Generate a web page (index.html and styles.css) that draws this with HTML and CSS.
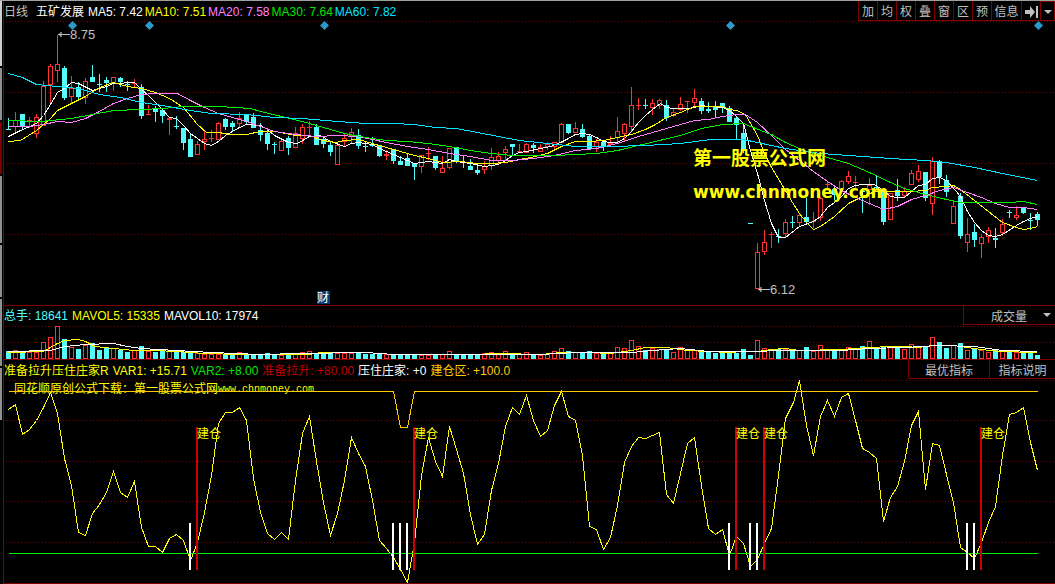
FILE: index.html
```html
<!DOCTYPE html>
<html lang="zh-CN">
<head>
<meta charset="utf-8">
<title>五矿发展 日线</title>
<link rel="stylesheet" href="styles.css">
</head>
<body>
<div class="app">
  <div class="rail"><i class="rail-light"></i><i class="rail-short"></i><i class="rail-red"></i><i></i><i class="rail-short"></i><i></i><i class="rail-short"></i></div>
  <main class="panels">
    <section class="panel">
      <header class="bar">
        <div class="legend low tight">
          <span class="silver period">日线</span><span class="white name">五矿发展</span>
          <span class="white">MA5: 7.42</span><span class="yellow">MA10: 7.51</span><span class="pink">MA20: 7.58</span><span class="green">MA30: 7.64</span><span class="aqua">MA60: 7.82</span>
        </div>
        <nav class="tools">
          <button>加</button><button>均</button><button>权</button><button>叠</button><button>窗</button><button>区</button><button>预</button><button class="wide">信息</button><button aria-label="移到最后"><svg width="13" height="12" viewBox="0 0 13 12"><path d="M0 4h5V0l5 6-5 6V8H0zM11 0h2v12h-2z" fill="#c0c0c0"/></svg></button><button class="more" aria-label="更多"><i class="caret"></i></button>
        </nav>
      </header>
      <svg class="chart" viewBox="4 21 1051 284">
        <g class="grid"><path d="M6 21.5H1055M6 92.5H1055M6 163.5H1055M6 234.5H1055"/></g>
        <g id="candles" class="crisp"></g>
        <g class="lines">
          <polyline class="l-white" points="8,136 20,130 36,123 43,115 50,104 57,92 64,88 71,82 78,83 92,90 106,86 113,83 134,82 141,89 150,97 160,107 169,117 176,118 183,125 190,133 197,138 204,143 211,145 218,141 225,135 239,127 246,124 260,125 267,129 274,135 288,142 297,143 309,136 320,135 330,141 344,146 351,143 358,142 372,144 379,148 393,154 407,160 414,163 428,161 442,163 449,159 456,161 470,163 484,166 498,164 505,160 512,155 519,152 526,151 540,148 550,146 560,142 568,138 575,134 582,133 589,134 596,137 603,141 610,142 617,142 624,138 631,131 638,122 645,115 652,109 660,103 666,107 673,108 690,108 701,105 708,106 722,107 729,110 736,116 743,123 750,150 757,173 764,200 771,223 778,237 785,237 799,226 813,221 820,216 827,207 834,202 841,196 848,188 855,185 862,184 874,184 883,190 890,196 897,197 904,197 911,191 918,185 925,184 932,178 939,177 946,180 955,190 960,196 967,211 974,222 981,230 988,235 995,236 1002,234 1016,225 1023,221 1030,218 1037,216"/>
          <polyline class="l-yellow" points="8,141 20,140 36,130 50,118 57,110 71,103 85,96 99,87 113,82 127,86 141,88 155,92 169,98 183,107 197,124 206,132 218,132 230,134 246,134 260,131 275,131 295,135 309,135 323,140 335,142 344,140 358,139 372,143 386,147 400,151 414,155 428,158 442,162 460,161 477,163 491,163 505,162 519,159 530,157 547,153 561,146 575,141 589,141 603,140 617,137 631,134 645,129 655,124 666,117 680,112 694,106 722,106 729,109 736,110 745,114 757,135 764,153 771,167 785,190 792,202 799,213 806,222 813,229 820,226 834,216 848,203 862,196 875,191 911,191 925,190 932,187 946,186 953,185 960,189 974,200 988,211 1002,222 1016,227 1023,229 1030,228 1037,226"/>
          <polyline class="l-pink" points="8,126 29,126 43,124 57,121 71,122 85,118 99,111 113,103 127,98 141,94 155,93 177,93 190,100 204,107 218,113 232,117 246,121 260,126 274,131 295,134 316,136 337,135 358,136 372,139 386,142 407,146 428,149 449,153 470,156 491,160 512,160 533,158 554,155 575,150 596,148 617,143 638,136 659,130 680,124 694,120 708,119 722,116 736,114 745,114 757,122 771,135 785,149 799,160 813,171 827,181 841,190 855,197 869,203 883,209 897,206 911,199 925,195 939,190 953,187 967,192 981,197 995,203 1009,207 1023,207 1037,209"/>
          <polyline class="l-green" points="8,120 40,121 71,118 92,114 113,110 141,109 162,108 183,106 218,106 250,108 260,111 281,116 302,121 323,127 344,133 365,137 386,140 407,141 428,143 449,146 470,150 491,153 512,155 554,155 575,154 596,153 617,150 638,145 659,140 680,135 701,128 722,124 743,123 750,126 771,134 785,142 806,151 827,157 848,163 869,172 890,182 904,188 925,194 946,199 960,202 1009,202 1023,201 1037,204"/>
          <polyline class="l-aqua" points="8,73 22,77 36,84 57,86 78,88 99,94 120,97 141,102 162,105 190,110 211,113 246,114 274,117 302,118 337,121 365,123 393,123 414,124 435,127 456,128 477,132 498,136 519,140 547,143 575,146 610,146 645,145 680,143 710,139 743,139 757,142 785,148 820,153 848,155 890,158 925,160 946,162 974,167 1002,173 1037,180"/>
        </g>
        <path class="marks" d="M72.500 21l4.500 4.500-4.500 4.500-4.500-4.500zM149.500 21l4.500 4.500-4.500 4.500-4.500-4.500zM324.500 21l4.500 4.500-4.500 4.500-4.500-4.500zM730.500 21l4.500 4.500-4.500 4.500-4.500-4.500zM1038.500 21l4.500 4.500-4.500 4.500-4.500-4.500z"/>
        <path class="arrow" d="M58 34.500h12M61 32v5M59 34.500l2-2M59 34.500l2 2M758 289.500h12M761 287v5M759 289.500l2-2M759 289.500l2 2"/>
        <text class="price" x="70" y="39">8.75</text>
        <text class="price" x="770" y="294">6.12</text>
        <rect class="badge" x="317" y="291" width="13" height="13"/>
        <text class="badge-text" x="317" y="302">财</text>
        <text class="brand" x="693" y="165">第一股票公式网</text>
        <text class="site" x="693" y="198">www.chnmoney.com</text>
      </svg>
    </section>

    <section class="panel">
      <header class="bar">
        <div class="legend">
          <span class="cyan">总手: 18641</span><span class="yellow">MAVOL5: 15335</span><span class="white">MAVOL10: 17974</span>
        </div>
        <div class="picker"><select aria-label="副图指标"><option>成交量</option></select><i class="caret"></i></div>
      </header>
      <svg class="chart" viewBox="4 326 1051 33">
        <g class="grid"><path d="M6 326.500H1055M6 342.500H1055"/></g>
        <g id="volumes" class="crisp"></g>
        <g class="lines">
          <polyline class="l-yellow" points="8,352 43,351 57,343 64,340 78,339 85,341 95,346 113,348 134,350 155,350 176,351 204,353 240,354 309,354 320,352 365,352 393,354 470,354 500,353 540,354 561,352 589,352 610,353 631,350 645,347 666,347 687,350 708,351 729,352 743,351 757,351 771,349 785,348 799,350 841,349 869,347 890,346 904,346 918,347 932,345 953,345 967,347 981,349 1000,351 1037,352"/>
          <polyline class="l-white" points="8,351 50,350 64,346 85,344 113,343 127,346 141,348 176,350 211,352 260,354 300,353 365,352 393,354 540,354 575,352 631,352 652,350 680,348 708,351 750,351 785,350 841,350 869,348 904,347 939,345 974,346 1002,350 1037,351"/>
        </g>
      </svg>
    </section>

    <section class="panel">
      <header class="bar">
        <div class="legend low">
          <span class="yellow">准备拉升压住庄家R</span><span class="yellow">VAR1: +15.71</span><span class="green">VAR2: +8.00</span><span class="red">准备拉升: +80.00</span><span class="white">压住庄家: +0</span><span class="gold">建仓区: +100.0</span>
        </div>
        <div class="actions"><button>最优指标</button><button>指标说明</button></div>
      </header>
      <svg class="chart" viewBox="4 380 1051 203">
        <g class="grid"><path d="M6 380.500H1055M6 420.500H1055M6 461.500H1055M6 501.500H1055M6 542.500H1055"/></g>
        <g class="note">
          <text x="14" y="393">同花顺原创公式下载：第一股票公式网</text>
          <text class="mono" x="218" y="392">www.chnmoney.com</text>
        </g>
        <g class="lines">
          <polyline class="l-yellow" points="8,409 15,404 22,434 29,429 36,420 43,407 50,392 57,413 64,458 71,485 78,532 85,535 92,513 99,504 106,492 113,471 120,492 127,497 134,481 141,527 148,546 155,546 162,552 169,538 176,534 183,540 190,560 197,542 204,512 211,475 218,423 225,412 232,412 239,407 246,420 253,478 260,512 267,533 274,539 281,532 288,539 295,480 302,433 309,416 316,461 323,502 330,535 337,513 344,480 351,437 358,453 365,466 372,500 379,540 386,548 393,557 400,569 407,582 414,542 421,475 428,437 435,461 442,476 449,426 456,449 463,473 470,514 477,544 484,534 491,490 498,463 505,426 512,407 519,414 526,395 533,420 540,436 547,430 554,405 561,391 568,416 575,420 582,455 589,526 596,529 603,549 610,537 617,505 624,462 631,446 638,437 645,438 652,435 659,432 666,494 673,503 680,473 687,443 694,437 701,485 708,528 715,534 722,529 729,555 736,536 743,543 750,566 757,559 764,543 771,528 778,475 785,418 793,402 799,380 806,425 813,455 820,416 827,400 834,416 841,397 848,393 855,420 862,448 869,452 876,458 883,521 890,497 897,486 904,461 911,425 918,411 925,489 932,443 939,445 946,474 953,502 960,547 967,552 974,558 981,542 988,522 995,506 1002,455 1009,414 1016,412 1023,407 1030,442 1037,470"/>
          <polyline class="l-green" points="8,553 1037,553"/>
          <polyline class="l-gold" points="8,391 393,391 400,427 407,427 414,391 1037,391"/>
        </g>
        <path class="sig-white" d="M190 523v47M393 523v47M400 523v47M407 523v47M729 523v47M750 523v47M757 523v47M967 523v47M974 523v47"/>
        <path class="sig-red" d="M197 427v143M414 427v143M736 427v143M764 427v143M981 427v143"/>
        <g class="note"><text x="197" y="438">建仓</text><text x="414" y="438">建仓</text><text x="736" y="438">建仓</text><text x="764" y="438">建仓</text><text x="981" y="438">建仓</text></g>
      </svg>
    </section>
  </main>
</div>
<script src="chart.js"></script>
</body>
</html>
```
FILE: styles.css
```css
* { box-sizing: border-box; }
body {
  margin: 0;
  background: #000;
  color: #c0c0c0;
  font: 12px/18px "Liberation Sans", "Noto Sans CJK SC", sans-serif;
}
.app { display: flex; border-top: 1px solid #a0a0a0; }
.rail { display: flex; flex-direction: column; flex: none; width: 3px; gap: 2px; padding-right: 1px; }
.rail i { display: block; height: 67px; background: #909090; }
.rail .rail-light { height: 65px; background: #d0d0d0; }
.rail .rail-short { height: 52px; }
.rail .rail-red { height: 52px; background: #800000; }
.panels { flex: 1; min-width: 0; border-left: 1px solid #800000; }
.panel { border-bottom: 1px solid #800000; }
.bar { display: flex; justify-content: space-between; height: 20px; white-space: nowrap; }
.legend { display: flex; gap: 4px; line-height: 20px; }
.legend.low { line-height: 22px; }
.legend.tight { gap: 2px; }
.period { margin-right: 6px; }
.name { margin-right: 2px; }
.chart { display: block; width: 100%; height: auto; }

.silver { color: #c0c0c0; }
.white { color: #fff; }
.yellow { color: #ff0; }
.pink { color: #ff80ff; }
.green { color: #00e600; }
.aqua { color: #00e5ff; }
.cyan { color: #54fcfc; }
.red { color: #c00000; }
.gold { color: #ffc800; }

button, select {
  margin: 0;
  padding: 0;
  border: 0;
  border-radius: 0;
  background: #000;
  color: #c0c0c0;
  font: inherit;
}
.tools { display: flex; border-bottom: 1px solid #800000; }
.tools button {
  display: flex;
  align-items: center;
  justify-content: center;
  width: 19px;
  padding-top: 2px;
  border-left: 1px solid #800000;
}
.tools .wide { width: 30px; }
.tools .more { width: 15px; border-top: 1px solid #800000; border-right: 1px solid #800000; }
.caret { width: 0; border: 4px solid transparent; border-top-color: #c0c0c0; border-bottom: 0; }
.picker { display: flex; position: relative; width: 92px; height: 19px; border: 1px solid #800000; border-width: 0 0 1px 1px; }
.picker select { width: 100%; appearance: none; padding: 2px 0 0 27px; }
.picker .caret { position: absolute; right: 4px; top: 7px; pointer-events: none; }
.actions { display: flex; height: 19px; border-bottom: 1px solid #800000; }
.actions button { width: 66px; padding-top: 2px; border-left: 1px solid #800000; }
.actions button:first-child { width: 81px; }

.crisp, .lines { shape-rendering: crispEdges; }
.lines { fill: none; transform: translate(0.5px, 0.5px); }
.grid { fill: none; stroke: #800000; stroke-dasharray: 1 2; shape-rendering: crispEdges; }
.l-white { stroke: #fff; }
.l-yellow { stroke: #ff0; }
.l-pink { stroke: #ff80ff; }
.l-green { stroke: #00f000; }
.l-aqua { stroke: #00e5ff; }
.l-gold { stroke: #ffc800; }
.up { fill: #000; stroke: #ff3232; }
.down { fill: #54fcfc; stroke: none; }
.wick-up { stroke: #ff3232; }
.wick-down { stroke: #54fcfc; }
.marks { fill: #2a9ac8; }
.arrow { fill: none; stroke: #c0c0c0; }
.price { fill: #c0c0c0; font-size: 13px; }
.badge { fill: #0a3a6c; }
.badge-text { fill: #fff; font-size: 12px; }
.brand { fill: #ff0; font: bold 19px "Noto Sans CJK SC", sans-serif; }
.site { fill: #ff0; font: bold 17px "DejaVu Sans", sans-serif; }
.note { fill: #ff0; font-size: 12px; }
.mono { font: 10px "Liberation Mono", monospace; }
.sig-white { stroke: #fff; stroke-width: 2; shape-rendering: crispEdges; }
.sig-red { stroke: #d00000; stroke-width: 2; shape-rendering: crispEdges; }
```
FILE: chart.js
```js
// One entry per day: direction, then high, body top, body bottom, low in chart units.
const days = `c118,129,129,129 r112,120,127,133 c114,114,126,130 r117,120,121,128 r114,117,134,138 r81,86,126,126 r64,66,85,103
r35,64,71,82 c66,68,98,100 r76,88,97,103 c82,87,97,100 r78,81,98,104 c65,77,82,82 c74,84,84,92 c77,80,83,92 r77,77,83,91
c77,78,82,87 c81,84,85,91 r79,83,83,87 c84,87,116,119 r105,114,114,115 c106,108,112,122 c108,110,116,123 r118,118,120,135
c116,126,126,129 c128,128,143,150 c133,139,157,157 r141,144,155,155 r130,139,142,150 r130,138,138,142 r122,123,140,140
c118,119,127,130 c121,123,127,132 r112,118,124,128 c115,115,122,124 c113,117,128,128 c123,130,135,141 c129,133,144,150
c142,144,144,154 r138,141,151,151 c136,138,148,155 r127,133,148,148 r124,127,139,144 r121,127,127,135 c124,127,145,145
c136,139,144,148 c141,145,152,156 r143,145,165,165 r134,138,142,146 r128,132,136,143 c129,135,146,149 c142,146,146,152
c137,145,145,147 c145,145,156,157 r150,154,156,160 c149,149,161,164 c156,161,165,165 c153,158,166,166 c163,163,167,180
r155,155,167,173 r147,153,153,160 c156,156,168,170 r156,168,173,173 r148,148,168,169 c147,147,162,163 c155,162,162,168
c159,166,170,170 c163,170,173,175 r161,166,170,174 r148,157,166,170 r152,156,161,164 r146,149,153,160 c144,144,147,155
r144,151,151,152 r143,144,153,153 c143,145,148,153 r144,147,152,152 r142,144,147,150 r142,142,147,150 r123,124,143,143
c124,124,133,134 r122,128,133,133 c124,129,137,138 c135,136,149,149 r139,142,147,152 c140,142,147,151 r136,143,145,147
r117,131,138,144 r123,124,134,142 r87,105,127,131 r98,105,105,110 c99,105,105,109 r99,103,108,115 r99,100,106,109
c100,105,118,121 r109,112,116,117 r97,104,110,111 r101,101,101,113 r89,98,103,106 c98,101,111,114 c102,109,111,113
c101,106,110,117 c103,103,108,113 c106,108,122,122 c116,118,125,140 c123,133,150,153 c223,223,223,223 r243,252,289,289
r230,242,252,255 r232,234,235,248 c229,236,236,243 r219,222,234,238 c216,222,222,228 r214,215,223,226 c198,217,222,222
r212,221,221,228 r197,198,218,221 r181,184,184,188 c185,189,195,200 r180,181,190,190 r171,176,182,184 r176,182,182,189
c188,191,191,213 r178,185,190,205 c175,187,187,190 c188,189,222,225 r193,193,220,220 c179,190,196,201 r187,191,196,198
r170,173,185,185 r165,171,180,182 c172,172,198,201 r157,161,204,215 c160,161,177,184 c175,180,192,197 r202,206,224,224
c193,196,236,239 r218,234,243,252 c224,232,240,247 r234,237,244,258 r227,230,237,243 c228,238,240,248 r219,224,233,236
c210,212,212,218 r206,215,218,220 c208,208,213,214 c213,220,220,230 c212,214,220,226`.split(/\s+/);

const volumeTops = [
  351,350,353,352,352,342,337,326,339,347,349,345,343,350,347,348,350,352,350,346,351,352,351,350,351,352,351,353,354,354,354,355,
  354,352,354,355,354,353,354,355,355,353,352,351,354,353,352,353,353,353,353,354,354,354,354,355,355,355,355,355,355,355,354,351,
  354,354,354,354,353,352,354,351,354,354,352,355,355,354,351,348,351,352,352,351,353,353,353,347,348,340,346,350,348,349,349,352,
  347,350,350,350,352,353,352,352,353,349,355,340,348,349,349,349,349,350,347,351,345,349,349,350,347,349,346,341,347,346,347,347,
  349,344,347,346,337,342,348,345,343,350,348,350,352,349,350,351,352,353,352,355
];
const STEP = 7;
const FIRST = 8;
const VOLUME_BASE = 359;

function bar(x, top, bottom, rising) {
  if (!rising) {
    return `<rect class="down" x="${x - 2}" y="${top}" width="5" height="${Math.max(1, bottom - top)}"/>`;
  }
  if (bottom - top > 1) {
    return `<rect class="up" x="${x - 1.5}" y="${top + 0.5}" width="4" height="${bottom - top - 1}"/>`;
  }
  return `<path class="wick-up" d="M${x - 2} ${top + 0.5}h5"/>`;
}

let candles = '';
let volumes = '';
days.forEach((day, i) => {
  const rising = day[0] === 'r';
  const [high, top, bottom, low] = day.slice(1).split(',').map(Number);
  const x = FIRST + i * STEP;
  candles += `<path class="${rising ? 'wick-up' : 'wick-down'}" d="M${x + 0.5} ${high}V${low}"/>` + bar(x, top, bottom, rising);
  volumes += bar(x, volumeTops[i], VOLUME_BASE, rising);
});
document.getElementById('candles').innerHTML = candles;
document.getElementById('volumes').innerHTML = volumes;
```
